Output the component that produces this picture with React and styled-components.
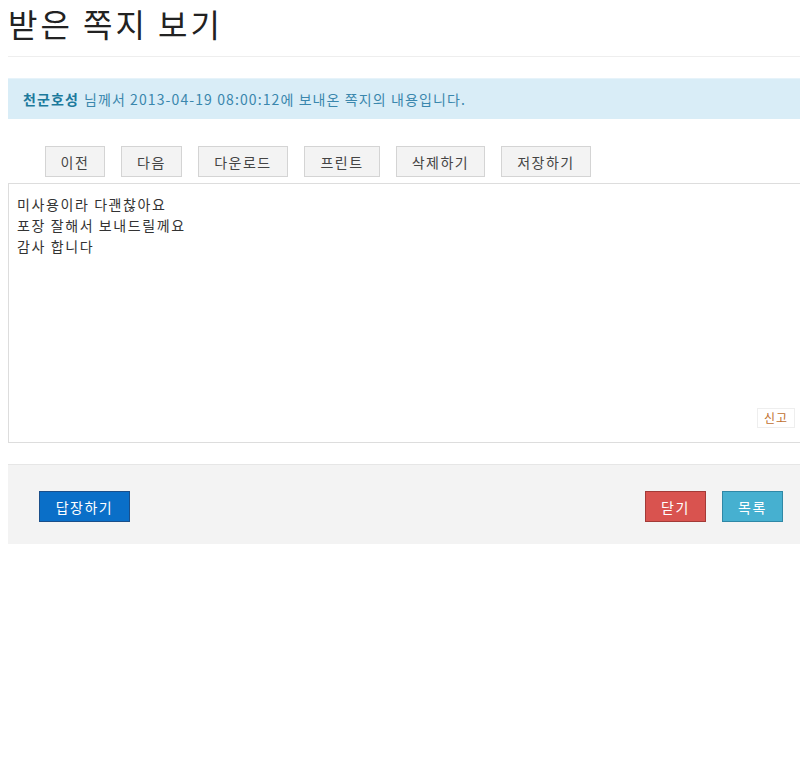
import React from 'react';
import styled, { createGlobalStyle } from 'styled-components';

const Global = createGlobalStyle`
  html, body { margin: 0; padding: 0; background: #fff; }
  body {
    font-family: "Noto Sans CJK KR", "Noto Sans", sans-serif;
    color: #333;
  }
`;

const Page = styled.div`
  padding: 0 0 0 8px;
`;

const Title = styled.h1`
  margin: 0;
  height: 57px;
  font-size: 32px;
  font-weight: 400;
  line-height: 46px;
  letter-spacing: 3px;
  color: #222;
  border-bottom: 1px solid #eee;
  box-sizing: border-box;
`;

const Alert = styled.div`
  margin-top: 21px;
  height: 40px;
  display: flex;
  align-items: center;
  padding-left: 15px;
  background: #d9edf7;
  border-top: 1px solid #e6f3fa;
  color: #3a87ad;
  font-size: 14px;
  letter-spacing: 1.1px;
  strong { color: #1c7a9c; font-weight: 700; margin-right: 5px; }
`;

const Toolbar = styled.div`
  display: flex;
  gap: 16px;
  box-sizing: border-box;
  height: 64px;
  align-items: flex-end;
  padding: 0 0 6px 37px;
`;

const ToolButton = styled.button`
  height: 31px;
  width: ${p => p.$w}px;
  border: 1px solid #d4d4d4;
  background: #f3f3f3;
  color: #444;
  font-family: inherit;
  font-size: 14px;
  letter-spacing: 1.5px;
  padding: 0;
`;

const Content = styled.div`
  position: relative;
  height: 260px;
  box-sizing: border-box;
  border: 1px solid #ddd;
  border-right: none;
  padding: 10px 8px;
  font-size: 14px;
  line-height: 21px;
  letter-spacing: 1.6px;
  color: #333;
`;

const Report = styled.span`
  position: absolute;
  right: 5px;
  bottom: 14px;
  padding: 0 6px;
  line-height: 18px;
  border: 1px solid #eee;
  font-size: 12px;
  letter-spacing: 1px;
  color: #c07030;
  background: #fff;
`;

const Footer = styled.div`
  margin-top: 21px;
  height: 80px;
  box-sizing: border-box;
  background: #f3f3f3;
  border-top: 1px solid #e6e6e6;
  display: flex;
  align-items: center;
  padding: 4px 17px 0 31px;
  gap: 16px;
`;

const Spacer = styled.div`
  flex: 1;
`;

const ActionButton = styled.button`
  height: 31px;
  width: ${p => p.$w}px;
  border: 1px solid ${p => p.$border};
  background: ${p => p.$bg};
  color: #fff;
  font-family: inherit;
  font-size: 14px;
  letter-spacing: 1.5px;
  padding: 0;
`;

const tools = [
  ['이전', 60], ['다음', 61], ['다운로드', 90], ['프린트', 76], ['삭제하기', 89], ['저장하기', 90],
];

export default function App() {
  return (
    <Page>
      <Global />
      <Title>받은 쪽지 보기</Title>
      <Alert>
        <strong>천군호성</strong> 님께서 2013-04-19 08:00:12에 보내온 쪽지의 내용입니다.
      </Alert>
      <Toolbar>
        {tools.map(([t, w]) => (
          <ToolButton key={t} $w={w}>{t}</ToolButton>
        ))}
      </Toolbar>
      <Content>
        미사용이라 다괜찮아요<br />
        포장 잘해서 보내드릴께요<br />
        감사 합니다
        <Report>신고</Report>
      </Content>
      <Footer>
        <ActionButton $w={91} $bg="#0a6fc8" $border="#1a4f8a">답장하기</ActionButton>
        <Spacer />
        <ActionButton $w={61} $bg="#d9534f" $border="#a33a37">닫기</ActionButton>
        <ActionButton $w={61} $bg="#46b0d0" $border="#2f88a6">목록</ActionButton>
      </Footer>
    </Page>
  );
}
